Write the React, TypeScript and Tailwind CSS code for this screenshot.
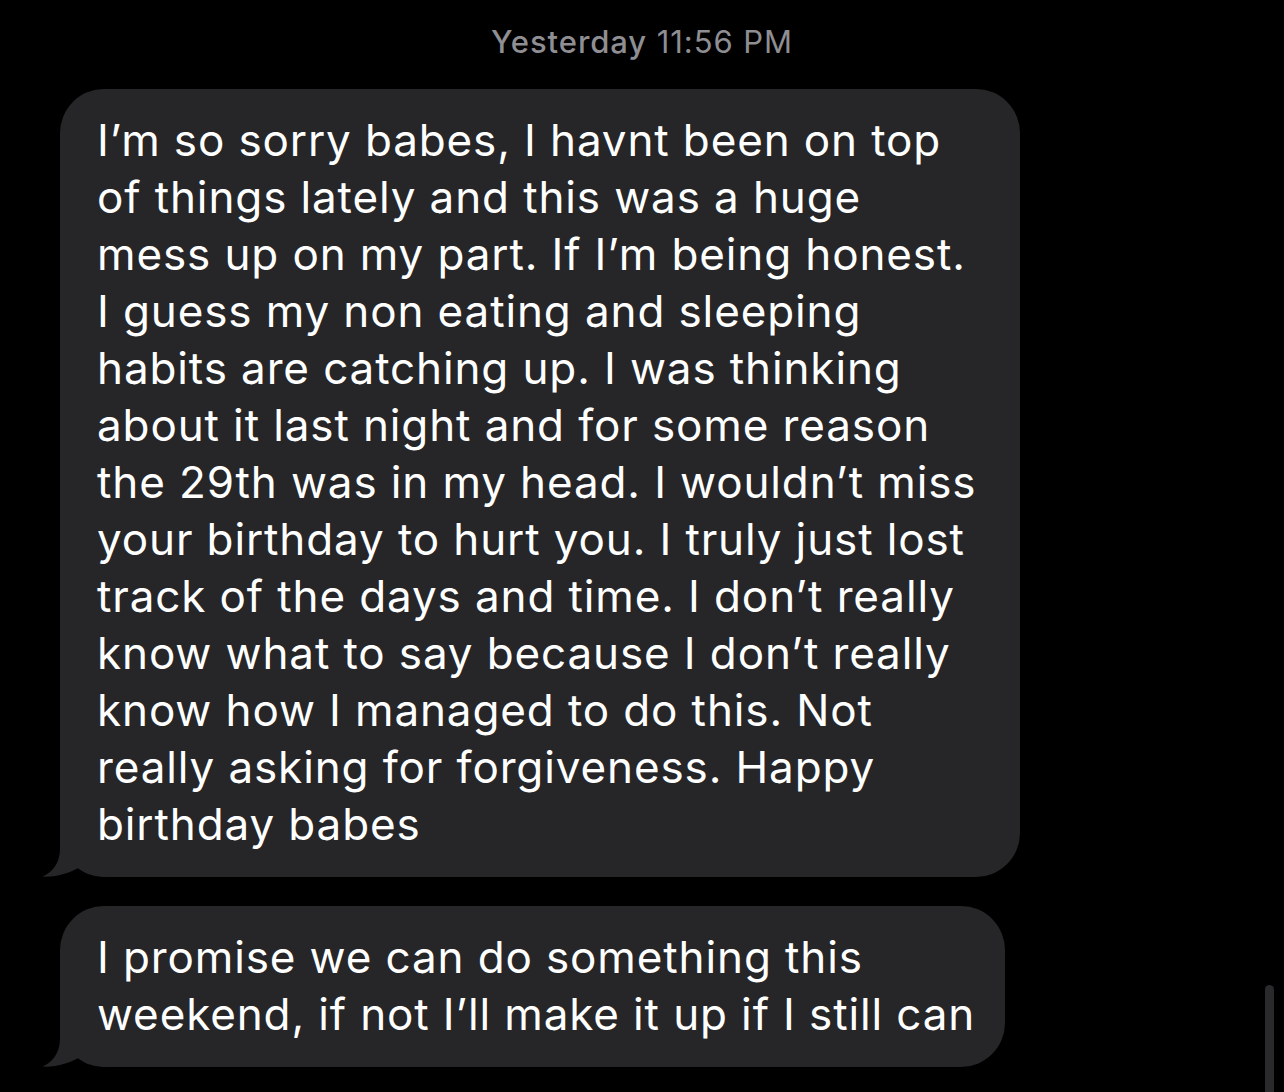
import React from 'react';

const first = [
  'I’m so sorry babes, I havnt been on top',
  'of things lately and this was a huge',
  'mess up on my part. If I’m being honest.',
  'I guess my non eating and sleeping',
  'habits are catching up. I was thinking',
  'about it last night and for some reason',
  'the 29th was in my head. I wouldn’t miss',
  'your birthday to hurt you. I truly just lost',
  'track of the days and time. I don’t really',
  'know what to say because I don’t really',
  'know how I managed to do this. Not',
  'really asking for forgiveness. Happy',
  'birthday babes',
];

const second = [
  'I promise we can do something this',
  'weekend, if not I’ll make it up if I still can',
];

// little curl at the bottom left of an incoming bubble
function Tail() {
  return (
    <svg
      className="absolute -left-[20px] bottom-0"
      width="70"
      height="50"
      viewBox="0 0 70 50"
    >
      <path
        d="M20 0 L20 22 C20 36 12 46 2 49.5 C16 50.5 30 46 40 40 C48 46 56 50 68 50 L68 0 Z"
        fill="#262629"
      />
    </svg>
  );
}

function Bubble({ lines, tight }: { lines: string[]; tight?: boolean }) {
  return (
    <div
      className={`relative w-fit rounded-[44px] bg-[#262629] pl-[37px] pt-[23px] pb-[24px] ${
        tight ? 'pr-[30px]' : 'pr-[44px]'
      }`}
    >
      <Tail />
      <div className="relative text-[44px] leading-[57px] tracking-[0.02em] text-white">
        {lines.map((l, i) => (
          <div key={i} className="whitespace-nowrap">
            {l}
          </div>
        ))}
      </div>
    </div>
  );
}

export default function App() {
  return (
    <div
      className="relative h-[1092px] w-[1284px] overflow-hidden bg-black"
      style={{ fontFamily: 'Inter, "Noto Sans", sans-serif' }}
    >
      <div className="pt-[22px] text-center text-[31px] leading-[40px] tracking-[0.03em] text-[#8e8e93]">
        <span className="font-medium">Yesterday</span> 11:56 PM
      </div>

      <div className="flex flex-col gap-[29px] pl-[60px] pt-[27px]">
        <Bubble lines={first} />
        <Bubble lines={second} tight />
      </div>

      {/* scroll indicator */}
      <div className="absolute left-[1265px] top-[985px] h-[120px] w-[9px] rounded-full bg-[#2a2a2c]" />
    </div>
  );
}
